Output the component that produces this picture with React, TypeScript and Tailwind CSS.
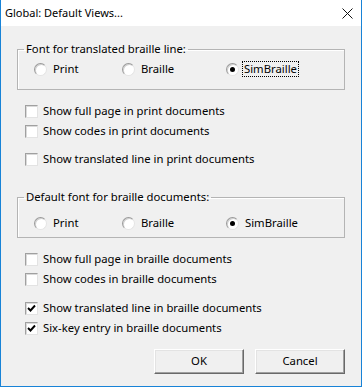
import React from "react";

const font = { fontFamily: '"Noto Sans", "Open Sans", sans-serif' };

function Radio({ label, checked, focus }: { label: string; checked?: boolean; focus?: boolean }) {
	return (
		<div className="flex items-center h-[16px]">
			<span className="relative flex-none w-[13px] h-[13px] rounded-full bg-white border border-t-[#9a9a9a] border-l-[#9a9a9a] border-b-[#e4e4e4] border-r-[#e4e4e4] shadow-[inset_1px_1px_0_#d0d0d0] flex items-center justify-center">
				{checked && <span className="w-[5px] h-[5px] rounded-full bg-black" />}
			</span>
			<span
				className={
					focus
						? "ml-[3px] px-[1px] leading-[14px] border border-dotted border-black"
						: "ml-[4px] px-[1px] leading-[14px] border border-transparent"
				}
			>
				{label}
			</span>
		</div>
	);
}

function Check({ label, checked, className }: { label: string; checked?: boolean; className: string }) {
	return (
		<div className={"flex items-center h-[16px] pl-[8px] " + className}>
			<span className="flex-none w-[13px] h-[13px] bg-white border border-t-[#a0a0a0] border-l-[#a0a0a0] border-b-[#e3e3e3] border-r-[#e3e3e3] shadow-[inset_1px_1px_0_#dadada] flex items-center justify-center">
				{checked && (
					<svg width="9" height="9" viewBox="0 0 9 9">
						<path d="M1 4 L3.5 6.5 L8 1.5" fill="none" stroke="black" strokeWidth="1.9" />
					</svg>
				)}
			</span>
			<span className="ml-[5px]">{label}</span>
		</div>
	);
}

function Group({ title, children, className }: { title: string; children: React.ReactNode; className: string }) {
	return (
		<fieldset className={"w-[328px] border border-[#b4b4b4] shadow-[inset_1px_1px_0_#fff] " + className}>
			<legend className="ml-[6px] px-[2px] leading-[16px]">{title}</legend>
			{children}
		</fieldset>
	);
}

function Button({ label }: { label: string }) {
	return (
		<button
			type="button"
			className="w-[90px] h-[25px] bg-[#f0f0f0] border border-t-white border-l-white border-b-[#696969] border-r-[#696969] shadow-[inset_-1px_-1px_0_#a0a0a0,inset_1px_1px_0_#e3e3e3] text-black text-[11.3px]"
		>
			{label}
		</button>
	);
}

export default function App() {
	return (
		<div
			className="w-[362px] h-[387px] flex flex-col border-l border-r border-b border-[#1883d7] text-[11.3px] text-black bg-[#f0f0f0]"
			style={font}
		>
			{/* title bar */}
			<div className="h-[26px] flex-none bg-white flex items-center justify-between pl-[4px] pr-[8px]">
				<span className="text-[11px]">Global: Default Views...</span>
				<svg width="11" height="11" viewBox="0 0 11 11">
					<path d="M0.5 0.5 L10.5 10.5 M10.5 0.5 L0.5 10.5" stroke="#111" strokeWidth="1" />
				</svg>
			</div>

			<div className="flex-1 flex flex-col px-[16px]">
				<Group title="Font for translated braille line:" className="mt-[15px] pb-[12px]">
					<div className="grid grid-cols-[88px_104px_1fr] pl-[16px] mt-[4px]">
						<Radio label="Print" />
						<Radio label="Braille" />
						<Radio label="SimBraille" checked focus />
					</div>
				</Group>

				<Check label="Show full page in print documents" className="mt-[13px]" />
				<Check label="Show codes in print documents" className="mt-[4px]" />
				<Check label="Show translated line in print documents" className="mt-[12px]" />

				<Group title="Default font for braille documents:" className="mt-[22px] pb-[6px]">
					<div className="grid grid-cols-[88px_104px_1fr] pl-[16px] mt-[10px]">
						<Radio label="Print" />
						<Radio label="Braille" />
						<Radio label="SimBraille" checked />
					</div>
				</Group>

				<Check label="Show full page in braille documents" className="mt-[13px]" />
				<Check label="Show codes in braille documents" className="mt-[4px]" />
				<Check label="Show translated line in braille documents" checked className="mt-[13px]" />
				<Check label="Six-key entry in braille documents" checked className="mt-[4px]" />

				<div className="flex justify-end gap-[11px] mt-[13px]">
					<Button label="OK" />
					<Button label="Cancel" />
				</div>
			</div>
		</div>
	);
}
